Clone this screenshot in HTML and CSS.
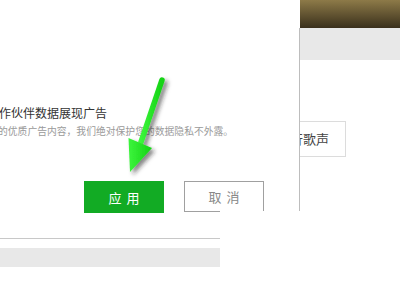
FILE: index.html
```html
<!DOCTYPE html>
<html lang="zh-CN">
<head>
    <meta charset="UTF-8">
    <title>广告设置</title>
    <link rel="stylesheet" href="styles.css">
</head>
<body>
    <div class="page">
        <div class="main">
            <!-- Dialog -->
            <div class="dialog">
                <div class="dlg-title">合作伙伴数据展现广告</div>
                <div class="dlg-desc">的优质广告内容，我们绝对保护您的数据隐私不外露。</div>
                <div class="dlg-actions">
                    <button class="btn btn-apply">应用</button>
                    <button class="btn btn-cancel">取消</button>
                </div>
            </div>

            <!-- Page behind the dialog -->
            <div class="side">
                <div class="banner"></div>
                <div class="side-body">
                    <div class="side-band"></div>
                    <div class="side-box">行歌声</div>
                </div>
            </div>
        </div>
        <div class="foot-band"></div>

        <!-- white patch over the lower right -->
        <div class="mask"></div>

        <!-- annotation arrow -->
        <svg class="arrow" width="400" height="300" viewBox="0 0 400 300">
            <defs>
                <filter id="shadow" x="-50%" y="-50%" width="200%" height="200%">
                    <feDropShadow dx="3" dy="3" stdDeviation="2" flood-color="#222" flood-opacity="0.55"/>
                </filter>
                <linearGradient id="green" x1="0" y1="0" x2="1" y2="0">
                    <stop offset="0" stop-color="#3cf53c"/>
                    <stop offset="1" stop-color="#14d214"/>
                </linearGradient>
            </defs>
            <g filter="url(#shadow)">
                <line x1="162" y1="80" x2="141" y2="142" stroke="url(#green)" stroke-width="5.5" stroke-linecap="round"/>
                <polygon points="128.5,138 152,148 130,172" fill="url(#green)"/>
            </g>
        </svg>
    </div>
</body>
</html>
```

FILE: styles.css
```css
body {
    margin: 0;
    background-color: #fff;
    font-family: "Noto Sans CJK SC", "Noto Sans", sans-serif;
}
.page {
    position: relative;
    width: 400px;
    height: 300px;
    overflow: hidden;
}
.main {
    display: grid;
    grid-template-columns: 299px 101px;
}
.dialog {
    height: 238px;
    border-bottom: 1px solid #c8c8c8;
    overflow: hidden;
}
.dlg-title {
    margin-top: 106px;
    margin-left: -13px;
    font-size: 12px;
    line-height: 14px;
    color: #333;
    white-space: nowrap;
}
.dlg-desc {
    margin-top: 5px;
    margin-left: -2px;
    font-size: 9.8px;
    line-height: 12px;
    color: #9a9a9a;
    white-space: nowrap;
}
.dlg-actions {
    display: flex;
    gap: 20px;
    margin-top: 44px;
    padding-left: 84px;
}
.btn {
    width: 80px;
    height: 32px;
    padding: 0 0 0 5px;
    font-family: inherit;
    font-size: 13px;
    letter-spacing: 5px;
    border-radius: 0;
    cursor: pointer;
}
.btn-apply {
    border: none;
    background-color: #12ab24;
    color: #fff;
}
.btn-cancel {
    height: 31px;
    border: 1px solid #a0a0a0;
    background-color: #fff;
    color: #888;
}
.side {
    display: flex;
    flex-direction: column;
}
.banner {
    height: 28px;
    margin-left: 1px;
    background: linear-gradient(to bottom, #8d7a48, #3a301c);
}
.side-body {
    flex: 1;
    border-left: 1px solid #bdbdbd;
    overflow: hidden;
}
.side-band {
    height: 32px;
    background-color: #e8e8e8;
}
.side-box {
    box-sizing: border-box;
    width: 66px;
    height: 36px;
    margin-top: 61px;
    margin-left: -20px;
    padding-right: 16px;
    border: 1px solid #dcdcdc;
    font-size: 13px;
    line-height: 34px;
    color: #444;
    text-align: right;
    white-space: nowrap;
}
.foot-band {
    width: 220px;
    height: 19px;
    margin-top: 9px;
    background-color: #e8e8e8;
}
.mask {
    position: absolute;
    left: 220px;
    top: 211px;
    right: 0;
    bottom: 0;
    background-color: #fff;
}
.arrow {
    position: absolute;
    left: 0;
    top: 0;
}
```
